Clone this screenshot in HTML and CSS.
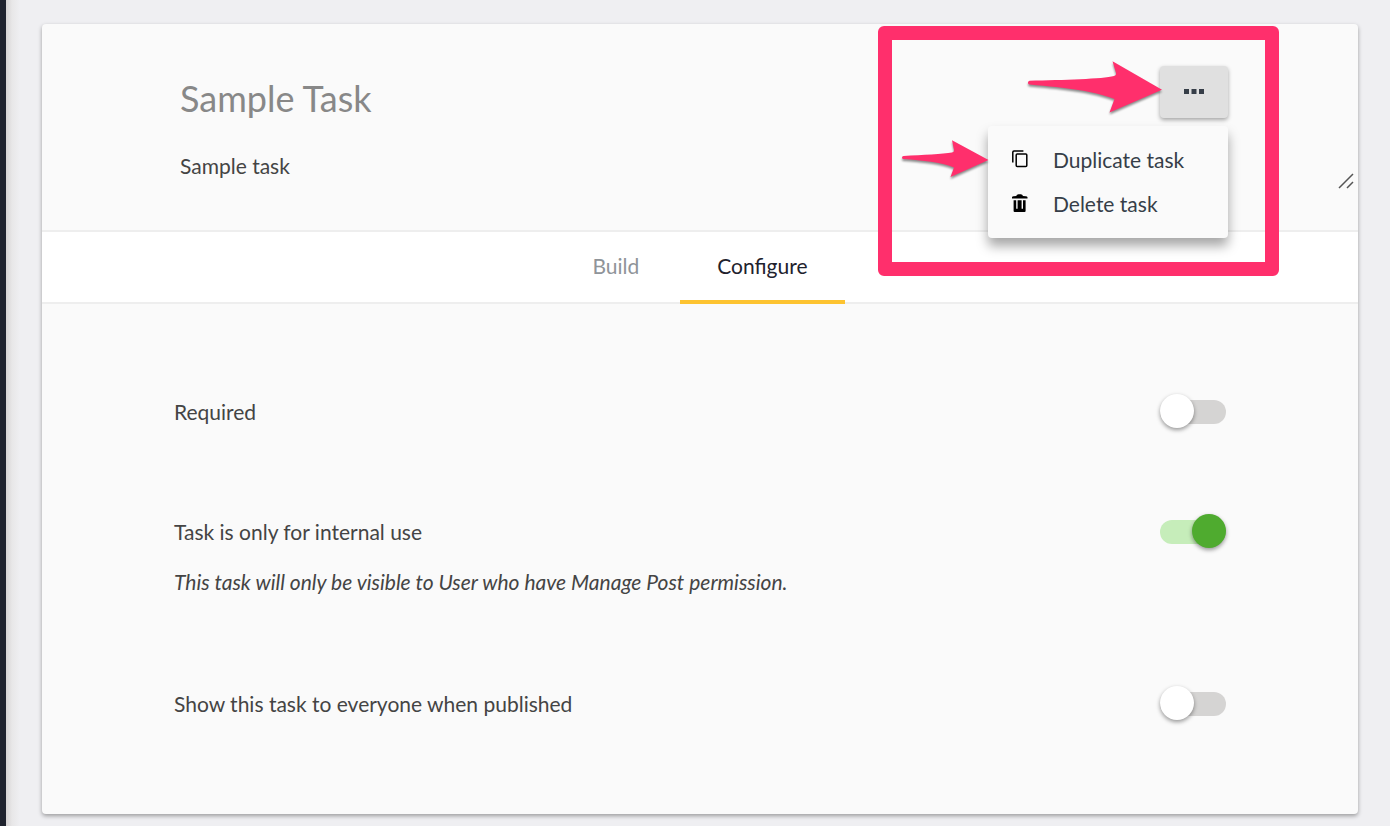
FILE: index.html
```html
<!DOCTYPE html>
<html lang="en">
<head>
<meta charset="utf-8">
<meta name="viewport" content="width=device-width, initial-scale=1">
<title>Sample Task</title>
<link rel="stylesheet" href="styles.css">
</head>
<body>
<div class="app">
  <div class="sidebar"></div>
  <main class="main">
    <section class="card">
      <header class="header">
        <div class="header-top">
          <input class="title" type="text" value="Sample Task" aria-label="Task name">
          <div class="actions">
            <button class="more" type="button" aria-label="More actions" aria-expanded="true">
              <svg width="20" height="5" viewBox="0 0 20 5" fill="currentColor"><path d="M0 0h5v5H0zM7.5 0h5v5h-5zM15 0h5v5h-5z"/></svg>
            </button>
            <div class="menu">
              <button class="menu-item" type="button">
                <svg width="18" height="20" viewBox="0 0 18 20" fill="none" stroke="#000" stroke-width="1.5"><path d="M1.8 12.6V2.2Q1.8 1 3 1H12.4"/><rect x="5.2" y="4" width="10.6" height="12.4" rx="1"/></svg>
                Duplicate task
              </button>
              <button class="menu-item" type="button">
                <svg width="18" height="20" viewBox="0 0 18 20" fill="#000"><path d="M1 4.500V3.300Q1.200 2.500 2.500 2.300L5.300 2Q5.800 .2 7.500 .2H9.800Q11.500 .2 12 2L14.800 2.300Q16.300 2.500 16.500 3.300V4.500Z"/><path d="M2.600 6.200H5.200V14.800H6.600V6.200H10.600V14.800H12V6.200H14.600V17Q14.600 18 13.600 18H3.600Q2.600 18 2.600 17Z"/></svg>
                Delete task
              </button>
            </div>
            <div class="callout">
              <svg class="arrows" viewBox="0 0 401 250" fill="#ff2f6c">
                <path d="M151.500 54.700C185 54 225 53 236 50Q238.500 49.300 238 47L234.500 35.300L284 63.700L231.500 86.500L236.500 73C215 65 190 62 151.500 58.600A2 2 0 0 1 151.500 54.700Z"/>
                <path d="M25.500 130C45 129 65 128 74 126.500Q76.300 126 76 124L74 114.300L110.500 134L72.500 151L76 141.500C62 136 45 134.500 25.500 133A1.500 1.500 0 0 1 25.500 130Z"/>
              </svg>
            </div>
          </div>
        </div>
        <div class="description-field">
          <textarea class="description" rows="1" aria-label="Task description">Sample task</textarea>
          <svg class="grip" width="16" height="16" viewBox="0 0 16 16" stroke="#555" stroke-width="1.500"><path d="M1 15L15 1M9 15L15 9"/></svg>
        </div>
      </header>
      <nav class="tabs">
        <button class="tab" type="button">Build</button>
        <button class="tab tab-active" type="button">Configure</button>
      </nav>
      <div class="settings">
        <div class="setting">
          <label for="required">Required</label>
          <input class="toggle" id="required" type="checkbox">
        </div>
        <div class="setting-group">
          <div class="setting">
            <label for="internal">Task is only for internal use</label>
            <input class="toggle" id="internal" type="checkbox" checked aria-describedby="internal-note">
          </div>
          <p class="note" id="internal-note">This task will only be visible to User who have Manage Post permission.</p>
        </div>
        <div class="setting">
          <label for="everyone">Show this task to everyone when published</label>
          <input class="toggle" id="everyone" type="checkbox">
        </div>
      </div>
    </section>
  </main>
</div>
</body>
</html>
```
FILE: styles.css
```css
* { box-sizing: border-box; }

body {
  margin: 0;
  background: #efeff2;
  color: #444;
  font: 21px/28px Lato, "Open Sans", sans-serif;
}

button, input, textarea { font: inherit; color: inherit; }
button { border: 0; background: none; cursor: pointer; }

.app { display: flex; min-height: 100vh; }
.sidebar { flex: none; width: 6px; background: #1e222d; }

.main {
  flex: 1;
  min-width: 0;
  padding: 24px 32px 12px 36px;
  background: linear-gradient(90deg, #d5d2d2, #e8e7e8 6px, #efeff2 14px);
}

.card {
  border-radius: 4px;
  background: #fafafa;
  box-shadow: 0 2px 4px rgba(0, 0, 0, .35);
}

.header { padding: 42px 0 38px; border-bottom: 2px solid #eee; }

.header-top {
  display: flex;
  align-items: flex-start;
  justify-content: space-between;
  padding: 0 130px;
}

.title {
  flex: 1;
  min-width: 0;
  height: 52px;
  margin: 6px 0 2px;
  padding: 0 8px;
  border: 0;
  outline: 0;
  background: none;
  color: #888;
  font-size: 36px;
}

.actions { position: relative; }

.more {
  display: flex;
  align-items: center;
  justify-content: center;
  width: 68px;
  height: 52px;
  padding: 0 0 2px;
  border-radius: 4px;
  background: #e0e0e0;
  color: #363e48;
  box-shadow: 0 2px 4px rgba(0, 0, 0, .35);
}

.menu {
  position: absolute;
  z-index: 1;
  top: 60px;
  right: 0;
  width: 240px;
  padding: 12px 0;
  border-radius: 4px;
  background: #fafafa;
  box-shadow: 0 8px 12px rgba(0, 0, 0, .35);
}

.menu-item {
  display: flex;
  align-items: center;
  gap: 24px;
  width: 100%;
  height: 44px;
  padding: 0 23px;
  color: #363e48;
}

.callout {
  position: absolute;
  z-index: 2;
  top: -40px;
  right: -51px;
  width: 401px;
  height: 250px;
  border: 14px solid #ff2f6c;
  border-radius: 6px;
  pointer-events: none;
}

.arrows {
  position: absolute;
  inset: -14px;
  filter: drop-shadow(0 2px 1px rgba(0, 0, 0, .45));
}

.description-field { position: relative; margin-top: 24px; }

.description {
  display: block;
  width: 100%;
  height: 42px;
  padding: 2px 138px;
  border: 0;
  outline: 0;
  background: none;
  resize: none;
  overflow: hidden;
}

.grip { position: absolute; right: 4px; bottom: 3px; }

.tabs {
  display: flex;
  justify-content: center;
  gap: 4px;
  height: 72px;
  border-bottom: 2px solid #eee;
  background: #fff;
}

.tab {
  height: 72px;
  padding: 2px 37px;
  border-bottom: 4px solid transparent;
  color: #8f9499;
}

.tab-active { border-color: #fdc330; color: #1e222d; }

.settings {
  display: flex;
  flex-direction: column;
  gap: 76px;
  padding: 86px 132px 88px;
}

.setting {
  display: flex;
  align-items: center;
  justify-content: space-between;
  height: 44px;
}

.note { margin: 16px 0 12px; line-height: 24px; font-style: italic; }

.toggle {
  appearance: none;
  position: relative;
  flex: none;
  width: 66px;
  height: 24px;
  margin: 0;
  border-radius: 12px;
  background: #d5d4d3;
  cursor: pointer;
}

.toggle::after {
  content: "";
  position: absolute;
  top: -6px;
  left: 0;
  width: 34px;
  height: 34px;
  border-radius: 50%;
  background: #fff;
  box-shadow: 0 2px 4px rgba(0, 0, 0, .4);
}

.toggle:checked { background: #c6edba; }
.toggle:checked::after { left: auto; right: 0; background: #4fab2f; }
```
